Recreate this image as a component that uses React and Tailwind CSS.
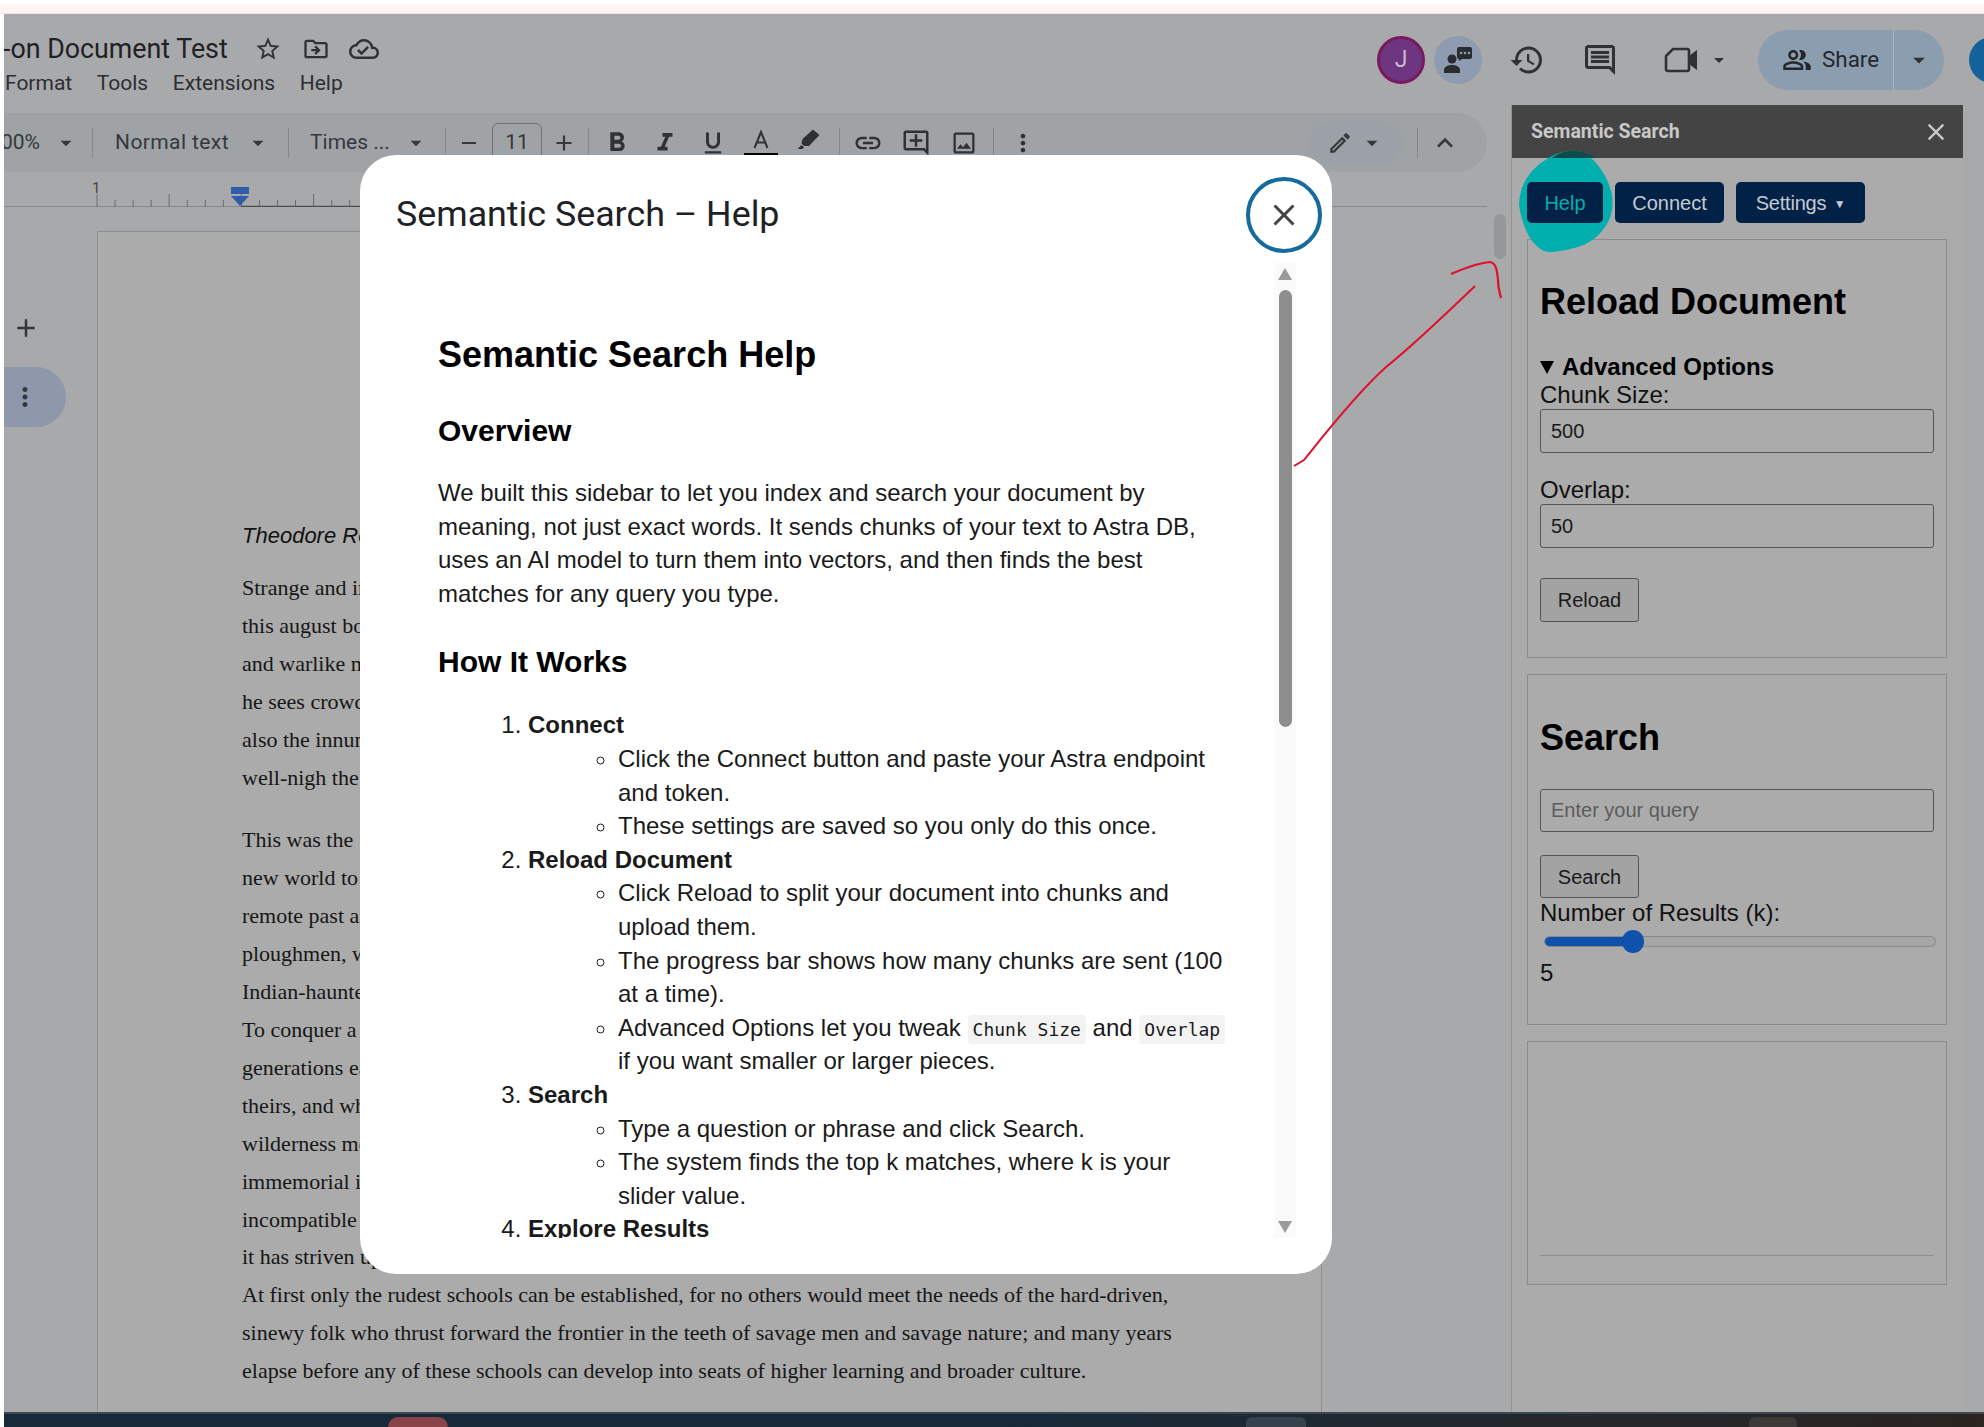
import React from "react";
import {
  MdStarBorder, MdOutlineDriveFileMove, MdOutlineCloudDone, MdHistory, MdOutlineComment, MdOutlinePeopleAlt,
  MdArrowDropDown, MdFormatBold, MdFormatItalic, MdFormatUnderlined, MdLink, MdOutlineAddComment,
  MdOutlineImage, MdMoreVert, MdOutlineEdit, MdKeyboardArrowUp, MdClose, MdAdd, MdRemove,
} from "react-icons/md";

const Divider = () => <div className="w-px h-[30px] bg-[#85888b] shrink-0" />;
const Slot = ({ children }) => (
  <div className="w-[48px] h-[40px] shrink-0 flex items-center justify-center text-[#2f3235]">{children}</div>
);

function Header() {
  return (
    <div className="h-[91px] shrink-0 flex overflow-hidden font-['Roboto',sans-serif]">
      <div className="w-[1373px] shrink-0 pt-[17px]">
        <div className="h-[36px] flex items-center">
          <span className="w-[240px] shrink-0 text-[26.8px] leading-[36px] text-[#1f2123] whitespace-nowrap -ml-[1px] mr-[1px]">-on Document Test</span>
          <div className="w-[48px] shrink-0 flex justify-center text-[#2f3235]"><MdStarBorder size={28} /></div>
          <div className="w-[48px] shrink-0 flex justify-center text-[#2f3235]"><MdOutlineDriveFileMove size={28} /></div>
          <div className="w-[48px] shrink-0 flex justify-center text-[#2f3235]"><MdOutlineCloudDone size={30} /></div>
        </div>
        <div className="mt-[2px] h-[28px] pl-[1px] flex gap-[24.6px] text-[21px] leading-[28px] text-[#2c2e31]">
          <span>Format</span><span>Tools</span><span>Extensions</span><span>Help</span>
        </div>
      </div>
      <div className="mt-[16px] h-[60px] flex items-center shrink-0 text-[#2f3235]">
        <div className="w-[48px] h-[48px] rounded-full bg-[#6e3580] border-[3px] border-[#7a1a5e] flex items-center justify-center text-[23px] text-[#c9b9cf]">J</div>
        <div className="ml-[9px] w-[48px] h-[48px] rounded-full bg-[#8f9bb0] flex items-center justify-center">
          <svg width="30" height="28" viewBox="0 0 30 28">
            <circle cx="9" cy="13" r="4.5" fill="#2a2d30" />
            <path d="M1 27 V24 C1 20.5 5 19 9 19 S17 20.5 17 24 V27 Z" fill="#2a2d30" />
            <path d="M14 3 a2 2 0 0 1 2-2 H27 a2 2 0 0 1 2 2 V11 a2 2 0 0 1-2 2 H19 L16 15 V13 a2 2 0 0 1-2-2 Z" fill="#2a2d30" />
            <circle cx="18" cy="7" r="1.3" fill="#8f9bb0" /><circle cx="22" cy="7" r="1.3" fill="#8f9bb0" /><circle cx="26" cy="7" r="1.3" fill="#8f9bb0" />
          </svg>
        </div>
        <div className="ml-[27px] w-[36px] flex justify-center"><MdHistory size={38} /></div>
        <div className="ml-[37px] w-[36px] flex justify-center"><MdOutlineComment size={38} /></div>
        <div className="ml-[45px] w-[36px] flex justify-center">
          <svg width="34" height="26" viewBox="0 0 34 26">
            <path d="M9 2 H23 a2 2 0 0 1 2 2 V22 a2 2 0 0 1-2 2 H4 a2 2 0 0 1-2-2 V9 Z" fill="none" stroke="#2f3235" strokeWidth="2.6" />
            <path d="M25 9 L33 3 V23 L25 17 Z" fill="#2f3235" />
          </svg>
        </div>
        <div className="ml-[8px] w-[24px] flex justify-center"><MdArrowDropDown size={28} /></div>
        <div className="ml-[27px] w-[186px] h-[60px] rounded-full bg-[#8b9eb0] flex items-center">
          <div className="w-[136px] h-full border-r border-[#a1b1c0] flex items-center pl-[24px] gap-[10px] text-[22.4px] text-[#23272b]">
            <MdOutlinePeopleAlt size={30} /><span>Share</span>
          </div>
          <div className="flex-1 flex justify-center"><MdArrowDropDown size={28} /></div>
        </div>
        <div className="ml-[25px] w-[48px] h-[46px] rounded-full bg-[#15629a] shrink-0" />
      </div>
    </div>
  );
}

function Toolbar() {
  return (
    <div className="h-[59px] shrink-0 bg-[#9fa3a6] rounded-r-[30px] flex items-center font-['Roboto',sans-serif] text-[21px] text-[#35383b]">
      <div className="w-[36px] shrink-0 flex justify-end overflow-hidden whitespace-nowrap">100%</div>
      <div className="w-[52px] shrink-0 flex justify-center"><MdArrowDropDown size={26} /></div>
      <Divider />
      <div className="w-[195px] shrink-0 pl-[22px] pr-[17px] flex items-center justify-between">
        <span className="tracking-[0.4px]">Normal text</span><MdArrowDropDown size={26} />
      </div>
      <Divider />
      <div className="w-[156px] shrink-0 pl-[21px] pr-[16px] flex items-center justify-between">
        <span>Times ...</span><MdArrowDropDown size={26} />
      </div>
      <Divider />
      <div className="w-[46px] shrink-0 flex justify-center"><MdRemove size={24} /></div>
      <div className="w-[50px] h-[40px] shrink-0 border border-[#6f7275] rounded-[6px] flex items-center justify-center">11</div>
      <div className="w-[44px] shrink-0 flex justify-center"><MdAdd size={26} /></div>
      <div className="w-[2px] shrink-0" />
      <Divider />
      <div className="w-[4px] shrink-0" />
      <Slot><MdFormatBold size={32} /></Slot>
      <Slot><MdFormatItalic size={30} /></Slot>
      <Slot><MdFormatUnderlined size={28} /></Slot>
      <Slot>
        <svg width="36" height="32" viewBox="0 0 36 32">
          <path d="M11.5 21 L18 5 L24.5 21 M14 15.5 H22" fill="none" stroke="#2f3235" strokeWidth="2" />
          <rect x="1" y="26" width="34" height="6" fill="#000" />
        </svg>
      </Slot>
      <Slot>
        <svg width="24" height="24" viewBox="0 0 24 24" className="-mt-[6px]">
          <path d="M16 1.5 L22.5 7 L12 18 L7 18 L4.5 15.5 L5.5 11 Z M4.5 17 L7 19.5 L5.5 21 L0.5 21 Z" fill="#2f3235" />
        </svg>
      </Slot>
      <div className="w-[6px] shrink-0" />
      <Divider />
      <div className="w-[4px] shrink-0" />
      <Slot><MdLink size={30} /></Slot>
      <Slot><MdOutlineAddComment size={30} /></Slot>
      <Slot><MdOutlineImage size={28} /></Slot>
      <div className="w-[5px] shrink-0" />
      <Divider />
      <div className="w-[5px] shrink-0" />
      <Slot><MdMoreVert size={28} /></Slot>
      <div className="w-[262px] shrink-0" />
      <div className="w-[93px] h-[43px] shrink-0 rounded-full bg-[#9ca1a7] flex items-center pl-[18px] gap-[6px]">
        <MdOutlineEdit size={26} /><MdArrowDropDown size={26} />
      </div>
      <div className="w-[15px] shrink-0" />
      <Divider />
      <div className="w-[11px] shrink-0" />
      <MdKeyboardArrowUp size={32} />
    </div>
  );
}

function Ruler() {
  const ticks = [];
  for (let i = 0; i < 15; i++) ticks.push(93 + i * 18.05);
  return (
    <div className="h-[35px] shrink-0 relative border-b border-[#85878a]">
      <svg width="360" height="35" viewBox="0 0 360 35" className="block">
        {ticks.map((x, i) => (
          <line key={i} x1={x} x2={x} y1={i % 4 === 0 ? 22 : 28} y2="35" stroke="#6c6c6c" strokeWidth="1" />
        ))}
        <line x1="237" x2="360" y1="34.5" y2="34.5" stroke="#4c4c4c" strokeWidth="1.5" />
        <rect x="227" y="15" width="18" height="7" fill="#2f5ba8" />
        <path d="M227 24 H245 L236 34 Z" fill="#2f5ba8" />
      </svg>
      <span className="absolute left-[88px] top-[6px] text-[15px] leading-[20px] font-['Roboto',sans-serif] text-[#444]">1</span>
    </div>
  );
}

const P1 = ["Strange and impressive", "this august body", "and warlike men", "he sees crowded", "also the innumerable", "well-nigh the"];
const P2 = [
  "This was the", "new world to", "remote past and", "ploughmen, who", "Indian-haunted", "To conquer a", "generations each",
  "theirs, and who", "wilderness men", "immemorial in", "incompatible with", "it has striven upward",
  "At first only the rudest schools can be established, for no others would meet the needs of the hard-driven,",
  "sinewy folk who thrust forward the frontier in the teeth of savage men and savage nature; and many years",
  "elapse before any of these schools can develop into seats of higher learning and broader culture.",
];

function DocArea() {
  return (
    <div className="flex-1 flex min-h-0">
      <div className="w-[93px] shrink-0 pt-[103px]">
        <div className="pl-[7px] h-[36px] flex items-center text-[#33363a]"><MdAdd size={30} /></div>
        <div className="mt-[21px] w-[62px] h-[60px] rounded-r-[30px] bg-[#8e98aa] pl-[6px] flex items-center text-[#33363a]"><MdMoreVert size={30} /></div>
      </div>
      <div className="mt-[24px] w-[1225px] shrink-0 bg-[#ababab] border-t border-x border-[#8f8f8f] pl-[144px] pt-[285px] overflow-hidden whitespace-nowrap">
        <div className="font-['Liberation_Sans',sans-serif] italic text-[22px] leading-[38px] text-[#111]">Theodore Roosevelt</div>
        <div className="mt-[14px] font-['Liberation_Serif',serif] text-[22px] leading-[37.9px] text-[#161616]">
          {P1.map((t) => <div key={t}>{t}</div>)}
          <div className="mt-[25px]">{P2.map((t) => <div key={t}>{t}</div>)}</div>
        </div>
      </div>
    </div>
  );
}

function Field({ value, placeholder, h = "h-[44px]" }) {
  return (
    <input
      readOnly
      defaultValue={value}
      placeholder={placeholder}
      className={`block w-[394px] ${h} px-[10px] border border-[#555] rounded-[3px] bg-transparent text-[20px] text-[#1a1a1a] placeholder:text-[#5c5c5c] outline-none`}
    />
  );
}

function GreyButton({ children, h }) {
  return (
    <button className={`block w-[99px] ${h} border border-[#555] rounded-[3px] bg-[#a3a3a3] text-[20px] text-[#1a1a1a]`}>{children}</button>
  );
}

function Sidebar() {
  return (
    <div className="w-[452px] shrink-0 border-l border-[#929395] bg-[#ababab] font-['Liberation_Sans',sans-serif]">
      <div className="h-[53px] bg-[#444444] flex items-center justify-between pl-[19px] pr-[13px]">
        <span className="font-['Roboto',sans-serif] font-bold text-[19.5px] text-[#c8c8c8]">Semantic Search</span>
        <MdClose size={28} className="text-[#c8c8c8]" />
      </div>
      <div className="mt-[24px] ml-[15px] flex gap-[12px] relative z-20 text-[20px]">
        <button className="w-[76px] h-[41px] rounded-[5px] bg-[#012246] text-[#07adad]">Help</button>
        <button className="w-[109px] h-[41px] rounded-[5px] bg-[#012246] text-[#c5cad0]">Connect</button>
        <button className="w-[129px] h-[41px] rounded-[5px] bg-[#012246] text-[#c5cad0] tracking-[-0.2px]">Settings <span className="text-[12px] align-middle ml-[2px]">▼</span></button>
      </div>
      <div className="mt-[16px] ml-[15px] w-[420px] h-[419px] border border-[#8c8c8c] px-[12px] pt-[42px] text-[#111]">
        <h2 className="text-[36px] leading-[40px] font-bold text-black">Reload Document</h2>
        <div className="mt-[31px] h-[28px] flex items-center gap-[8px] text-[24px] font-bold text-black">
          <svg width="14" height="13" viewBox="0 0 14 13" className="shrink-0"><path d="M0 0 H14 L7 13 Z" fill="#000" /></svg>
          <span>Advanced Options</span>
        </div>
        <div className="h-[28px] text-[24px] leading-[28px]">Chunk Size:</div>
        <Field value="500" />
        <div className="mt-[23px] h-[28px] text-[24px] leading-[28px]">Overlap:</div>
        <Field value="50" />
        <div className="mt-[30px]"><GreyButton h="h-[44px]">Reload</GreyButton></div>
      </div>
      <div className="mt-[16px] ml-[15px] w-[420px] h-[351px] border border-[#8c8c8c] px-[12px] pt-[43px] text-[#111]">
        <h2 className="text-[36px] leading-[40px] font-bold text-black">Search</h2>
        <div className="mt-[31px]"><Field placeholder="Enter your query" h="h-[43px]" /></div>
        <div className="mt-[23px]"><GreyButton h="h-[43px]">Search</GreyButton></div>
        <div className="h-[28px] mt-[1px] text-[24px] leading-[28px]">Number of Results (k):</div>
        <div className="relative mt-[9px] ml-[4px] w-[392px] h-[11px] rounded-full border border-[#8a8a8a] bg-[#a6a6a6]">
          <div className="h-full w-[89px] rounded-full bg-[#0f52ac]" />
          <div className="absolute left-[77px] top-[-7px] w-[22px] h-[23px] rounded-full bg-[#0f52ac]" />
        </div>
        <div className="mt-[12px] h-[28px] text-[24px] leading-[28px]">5</div>
      </div>
      <div className="mt-[16px] ml-[15px] w-[420px] h-[244px] border border-[#8c8c8c] px-[12px] flex flex-col justify-end pb-[28px]">
        <div className="h-px bg-[#8f8f8f]" />
      </div>
    </div>
  );
}

const codeCls = "font-['DejaVu_Sans_Mono',monospace] text-[18px] leading-none bg-[#f3f3f3] rounded-[4px] px-[5px] py-[4px]";

function Modal() {
  return (
    <div className="absolute z-30 left-[360px] top-[155px] w-[972px] h-[1119px] rounded-[36px] bg-white flex flex-col font-['Liberation_Sans',sans-serif] text-[#1a1a1a]">
      <div className="h-[98px] shrink-0 pl-[36px] pr-[10px] pt-[22px] flex items-start justify-between">
        <div className="h-[76px] flex items-center font-['Roboto',sans-serif] text-[35.8px] text-[#202124]">Semantic Search – Help</div>
        <div className="w-[76px] h-[76px] rounded-full border-[4px] border-[#156a9e] flex items-center justify-center text-[#444]"><MdClose size={36} /></div>
      </div>
      <div className="mt-[10px] h-[975px] flex">
        <div className="flex-1 min-w-0 overflow-hidden pl-[78px] pr-[42px] pt-[67px] text-[24px] leading-[33.6px]">
          <h1 className="text-[36px] leading-[50px] font-bold text-black">Semantic Search Help</h1>
          <h2 className="mt-[30px] text-[30px] leading-[42px] font-bold text-black">Overview</h2>
          <p className="mt-[24px]">We built this sidebar to let you index and search your document by meaning, not just exact words. It sends chunks of your text to Astra DB, uses an AI model to turn them into vectors, and then finds the best matches for any query you type.</p>
          <h2 className="mt-[31px] text-[30px] leading-[42px] font-bold text-black">How It Works</h2>
          <ol className="mt-[25px] pl-[90px] list-decimal">
            <li><b>Connect</b>
              <ul className="pl-[90px] list-[circle]">
                <li>Click the Connect button and paste your Astra endpoint and token.</li>
                <li>These settings are saved so you only do this once.</li>
              </ul>
            </li>
            <li><b>Reload Document</b>
              <ul className="pl-[90px] list-[circle]">
                <li>Click Reload to split your document into chunks and upload them.</li>
                <li>The progress bar shows how many chunks are sent (100 at a time).</li>
                <li>Advanced Options let you tweak <code className={codeCls}>Chunk Size</code> and <code className={codeCls}>Overlap</code> if you want smaller or larger pieces.</li>
              </ul>
            </li>
            <li><b>Search</b>
              <ul className="pl-[90px] list-[circle]">
                <li>Type a question or phrase and click Search.</li>
                <li>The system finds the top k matches, where k is your slider value.</li>
              </ul>
            </li>
            <li><b>Explore Results</b></li>
          </ol>
        </div>
        <div className="w-[22px] mr-[36px] shrink-0 bg-[#fafafa] flex flex-col items-center pt-[5px] pb-[5px]">
          <svg width="14" height="12" viewBox="0 0 14 12"><path d="M7 0 L14 12 H0 Z" fill="#9a9a9a" /></svg>
          <div className="mt-[10px] w-[13px] h-[437px] rounded-full bg-[#8e8e8e]" />
          <div className="flex-1" />
          <svg width="14" height="12" viewBox="0 0 14 12"><path d="M0 0 H14 L7 12 Z" fill="#9a9a9a" /></svg>
        </div>
      </div>
    </div>
  );
}

export default function App() {
  return (
    <div className="relative w-[1984px] h-[1427px] overflow-hidden bg-white flex flex-col">
      <div className="h-[14px] shrink-0 bg-[#fff6f4] border-t-[4px] border-white border-b border-b-[#f8e2e2]" />
      <div className="flex-1 min-h-0 ml-[4px] bg-[#a8a9ab] flex flex-col">
        <Header />
        <div className="flex-1 min-h-0 flex">
          <div className="w-[1483px] shrink-0 pt-[8px] flex flex-col">
            <Toolbar />
            <Ruler />
            <DocArea />
          </div>
          <div className="w-[24px] shrink-0 pl-[7px] pt-[109px]">
            <div className="w-[12px] h-[45px] rounded-full bg-[#96979b]" />
          </div>
          <Sidebar />
        </div>
      </div>
      <div className="h-[15px] shrink-0 ml-[4px] border-t-[2px] border-[#3a4750] bg-gradient-to-r from-[#162a3a] via-[#172a39] to-[#2b2421] flex items-start">
        <div className="ml-[384px] mt-[3px] w-[60px] h-[12px] rounded-t-[10px] bg-[#8a4347]" />
        <div className="ml-[798px] mt-[3px] w-[60px] h-[12px] rounded-t-[6px] bg-[#37424c]" />
        <div className="ml-[443px] mt-[3px] w-[48px] h-[12px] rounded-t-[6px] bg-[#3d3a3a]" />
      </div>

      <svg className="absolute z-10 left-[1510px] top-[145px]" width="110" height="115" viewBox="0 0 110 115">
        <path d="M67 6 C82 8 98 30 102 50 C104 66 100 76 92 86 C80 100 66 104 42 107 C28 108 14 92 9 60 C10 40 18 24 42 11 C50 7 58 5 67 6 Z" fill="#00aeae" />
        <path d="M42 13 C50 7 58 5 67 6 C75 7 82 11 88 13 Z" fill="#0b4c4c" />
      </svg>

      <Modal />

      <svg className="absolute z-40 left-[1280px] top-[250px]" width="230" height="230" viewBox="0 0 230 230" fill="none">
        <path d="M14 216 L24 210 C40 190 75 145 106 117 C130 98 170 60 195 36" stroke="#e0102a" strokeWidth="2" />
        <path d="M171 24 C185 18 198 13 210 12 C216 13 217 20 218 30 C218 38 220 44 221 48" stroke="#e0102a" strokeWidth="2.2" />
      </svg>
    </div>
  );
}
